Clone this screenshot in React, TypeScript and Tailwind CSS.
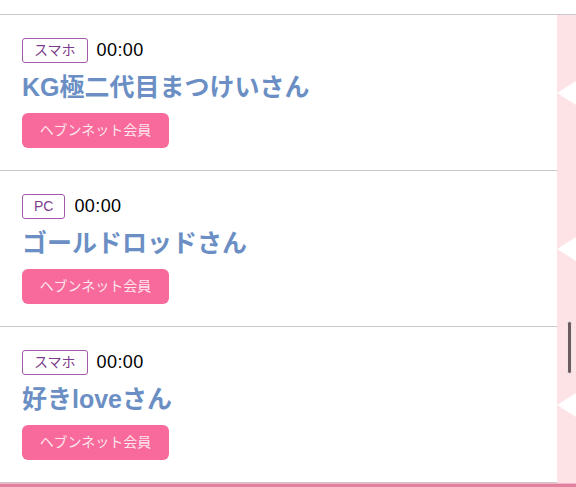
import React from 'react';

interface Entry {
  device: string;
  time: string;
  name: string;
}

const entries: Entry[] = [
  { device: 'スマホ', time: '00:00', name: 'KG極二代目まつけいさん' },
  { device: 'PC', time: '00:00', name: 'ゴールドロッドさん' },
  { device: 'スマホ', time: '00:00', name: '好きloveさん' },
];

const font = { fontFamily: '"Liberation Sans", "Noto Sans CJK JP", sans-serif' };

function EntryRow({ entry }: { entry: Entry }) {
  return (
    <div className="flex h-[156px]">
      {/* Main content */}
      <div className="w-[557px] border-b border-[#c9c9c9] bg-white pl-[22px] pt-[23px]">
        <div className="flex h-[25px] items-center gap-[9px]">
          <span className="flex h-[25px] items-center rounded-[3px] border border-[#a45aab] px-[11px] text-[14px] text-[#7d3d8e]">
            {entry.device}
          </span>
          <span className="text-[18px] tracking-[0.4px] text-black">{entry.time}</span>
        </div>
        <div className="mt-[6px] h-[36px] text-[25px] font-bold leading-[36px] text-[#6b8fc4]">
          {entry.name}
        </div>
        <button className="mt-[8px] flex h-[35px] w-[147px] items-center justify-center rounded-[6px] bg-[#f76a9b] text-[14px] text-[#fde6ee]">
          ヘブンネット会員
        </button>
      </div>
      {/* Side strip with notch */}
      <div className="flex flex-1 items-center justify-end bg-[#fde2e6]">
        <div className="h-0 w-0 border-y-[12px] border-r-[19px] border-y-transparent border-r-white" />
      </div>
    </div>
  );
}

export default function App() {
  return (
    <div className="relative h-[487px] w-[576px] overflow-hidden bg-white" style={font}>
      <div className="h-[15px] border-b border-[#c9c9c9] bg-white" />
      {entries.map((entry, i) => (
        <EntryRow key={i} entry={entry} />
      ))}
      <div className="h-[1px] bg-[#f3b6c7]" />
      <div className="h-[3px] bg-[#e2809f]" />

      {/* Scrollbar thumb */}
      <div className="absolute left-[567px] top-[321px] h-[53px] w-[5px] rounded-full border border-[#efe6e8] bg-[#6d5b60]" />
    </div>
  );
}
